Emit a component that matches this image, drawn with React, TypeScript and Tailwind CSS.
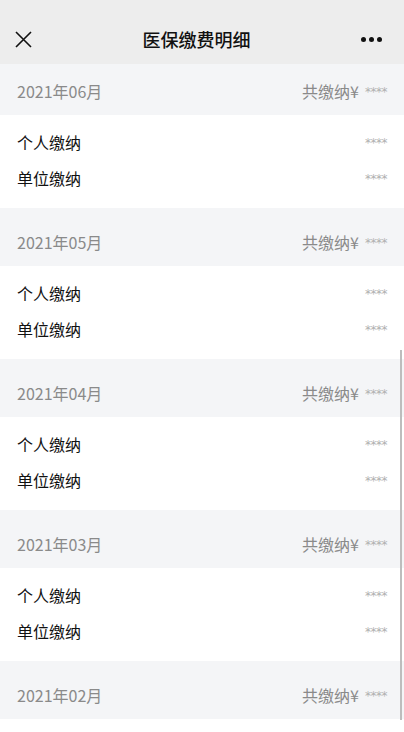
import React from "react";

const months = ["2021年06月", "2021年05月", "2021年04月", "2021年03月", "2021年02月"];

function Stars({ className = "" }: { className?: string }) {
  return (
    <span
      className={`text-[12px] leading-[12px] text-[#b0b0b0] tracking-[-0.5px] ${className}`}
      style={{ fontFamily: '"DejaVu Sans", sans-serif' }}
    >
      ****
    </span>
  );
}

export default function App() {
  return (
    <div
      className="relative w-[404px] h-[732px] overflow-hidden bg-white"
      style={{ fontFamily: '"Noto Sans CJK SC", "Noto Sans", sans-serif' }}
    >
      <div className="h-[64px] bg-[#ededed] flex items-center justify-between px-[15px] pt-[14px]">
        <svg width="17" height="17" viewBox="0 0 17 17" className="mt-[1px]">
          <path d="M1 1 L16 16 M16 1 L1 16" stroke="#111" strokeWidth="1.6" fill="none" />
        </svg>
        <div className="text-[18px] font-medium text-[#111] leading-[24px]">医保缴费明细</div>
        <div className="flex items-center gap-[3px] pr-[7px]">
          <span className="w-[5px] h-[5px] rounded-full bg-[#111]" />
          <span className="w-[5px] h-[5px] rounded-full bg-[#111]" />
          <span className="w-[5px] h-[5px] rounded-full bg-[#111]" />
        </div>
      </div>
      <div className="flex flex-col">
        {months.map((m, i) => (
          <div key={m} className="flex flex-col">
            <div
              className={`${i === 0 ? "h-[51px]" : "h-[58px]"} bg-[#f4f5f7] flex items-end justify-between pl-[17px] pr-[17px] pb-[12px]`}
            >
              <span className="text-[16px] leading-[24px] text-[#8a8a8a]">{m}</span>
              <span className="text-[16px] leading-[24px] text-[#8a8a8a] flex items-center">
                共缴纳¥<Stars className="ml-[6px] mt-[2px]" />
              </span>
            </div>
            {i < months.length - 1 ? (
              <div className="h-[93px] bg-white pt-[9px] pl-[17px] pr-[17px] flex flex-col">
                {["个人缴纳", "单位缴纳"].map((r) => (
                  <div key={r} className="h-[36px] flex items-center justify-between">
                    <span className="text-[16px] leading-[24px] text-[#111]">{r}</span>
                    <Stars className="mt-[2px]" />
                  </div>
                ))}
              </div>
            ) : (
              <div className="h-[13px] bg-white" />
            )}
          </div>
        ))}
      </div>
      <div className="absolute right-[2px] top-[350px] h-[370px] w-[2px] bg-[#bdbdbd]" />
    </div>
  );
}
